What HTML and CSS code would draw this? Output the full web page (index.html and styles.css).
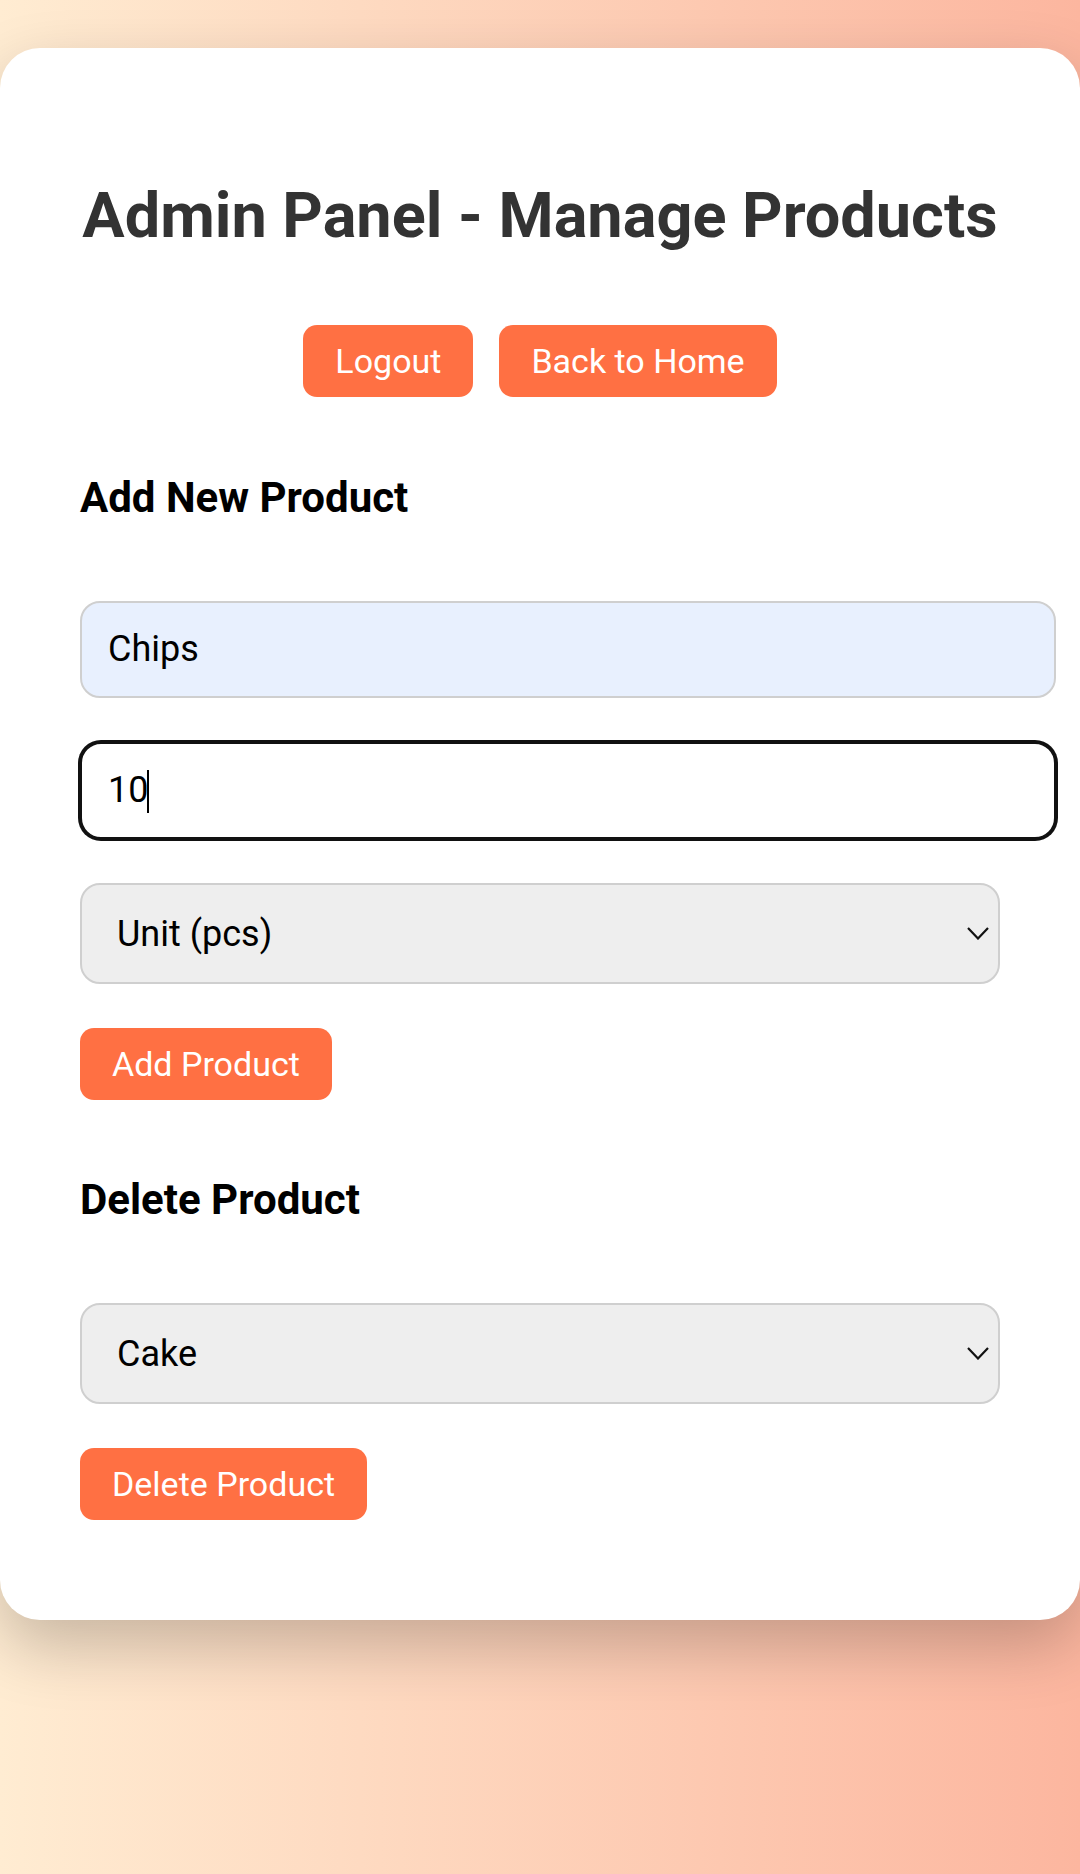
FILE: index.html
```html
<!DOCTYPE html>
<html lang="en">
<head>
<meta charset="utf-8">
<title>Admin Panel - Manage Products</title>
<link rel="stylesheet" href="styles.css">
</head>
<body>
<main class="card">
  <h1 class="title">Admin Panel - Manage Products</h1>
  <div class="top-actions">
    <button class="btn" type="button">Logout</button>
    <button class="btn" type="button">Back to Home</button>
  </div>

  <section class="section">
    <h3 class="section-title">Add New Product</h3>
    <div class="form">
      <input class="field field-autofill" type="text" value="Chips">
      <div class="field-wrap">
        <input class="field field-focus" type="text" value="10">
        <span class="caret"></span>
      </div>
      <div class="select-wrap">
        <select class="select">
          <option>Unit (pcs)</option>
        </select>
        <svg class="chevron" width="22" height="13" viewBox="0 0 22 13"><path d="M1 1 L11 11.5 L21 1" fill="none" stroke="#111" stroke-width="2.2"/></svg>
      </div>
      <div class="row"><button class="btn" type="button">Add Product</button></div>
    </div>
  </section>

  <section class="section section-delete">
    <h3 class="section-title">Delete Product</h3>
    <div class="form">
      <div class="select-wrap">
        <select class="select">
          <option>Cake</option>
        </select>
        <svg class="chevron" width="22" height="13" viewBox="0 0 22 13"><path d="M1 1 L11 11.5 L21 1" fill="none" stroke="#111" stroke-width="2.2"/></svg>
      </div>
      <div class="row"><button class="btn" type="button">Delete Product</button></div>
    </div>
  </section>
</main>
</body>
</html>
```
FILE: styles.css
```css
* { box-sizing: content-box; }

html, body {
  margin: 0;
  padding: 0;
}

body {
  min-height: 1874px;
  background: linear-gradient(to right, #ffecd2, #fcb69f);
  font-family: Roboto, "Liberation Sans", sans-serif;
  overflow: hidden;
}

.card {
  display: block;
  margin-top: 48px;
  background: #fff;
  border-radius: 40px;
  padding: 130px 80px 100px;
  box-shadow: 0 26px 64px rgba(0, 0, 0, 0.22);
}

.title {
  margin: 0 -40px;
  text-align: center;
  white-space: nowrap;
  font-size: 63px;
  line-height: 75px;
  font-weight: 700;
  color: #333;
}

.top-actions {
  display: flex;
  justify-content: center;
  gap: 26px;
  margin-top: 72px;
}

.btn {
  font-family: Roboto, "Liberation Sans", sans-serif;
  font-size: 34px;
  line-height: 40px;
  padding: 16px 32px;
  border: none;
  border-radius: 14px;
  background: #ff7043;
  color: #fff;
  cursor: pointer;
}

.section {
  margin-top: 76px;
}

.section-delete {
  margin-top: 75px;
}

.section-title {
  margin: 0;
  font-size: 42px;
  line-height: 49px;
  font-weight: 700;
  color: #000;
}

.form {
  display: flex;
  flex-direction: column;
  align-items: flex-start;
  gap: 44px;
  margin-top: 79px;
}

.field {
  display: block;
  width: 100%;
  font-family: Roboto, "Liberation Sans", sans-serif;
  font-size: 36px;
  line-height: 41px;
  height: 41px;
  padding: 26px;
  border: 2px solid #cfcfcf;
  border-radius: 20px;
  background: #fff;
  color: #000;
  outline: none;
  margin: 0;
}

.field-autofill {
  background: #e8f0fe;
}

.field-wrap {
  position: relative;
  width: 100%;
}

.field-focus {
  border-color: #111;
  box-shadow: 0 0 0 2px #111;
  border-radius: 21px;
}

.caret {
  position: absolute;
  left: 67px;
  top: 28px;
  width: 2px;
  height: 43px;
  background: #000;
}

.select-wrap {
  position: relative;
  width: 100%;
}

.select {
  display: block;
  box-sizing: border-box;
  width: 100%;
  height: 101px;
  margin: 0;
  padding: 0 60px 0 35px;
  font-family: Roboto, "Liberation Sans", sans-serif;
  font-size: 36px;
  color: #000;
  background: #eeeeee;
  border: 2px solid #cfcfcf;
  border-radius: 20px;
  appearance: none;
  -webkit-appearance: none;
  outline: none;
}

.chevron {
  position: absolute;
  right: 11px;
  top: 44px;
}

.row {
  display: flex;
}
```
